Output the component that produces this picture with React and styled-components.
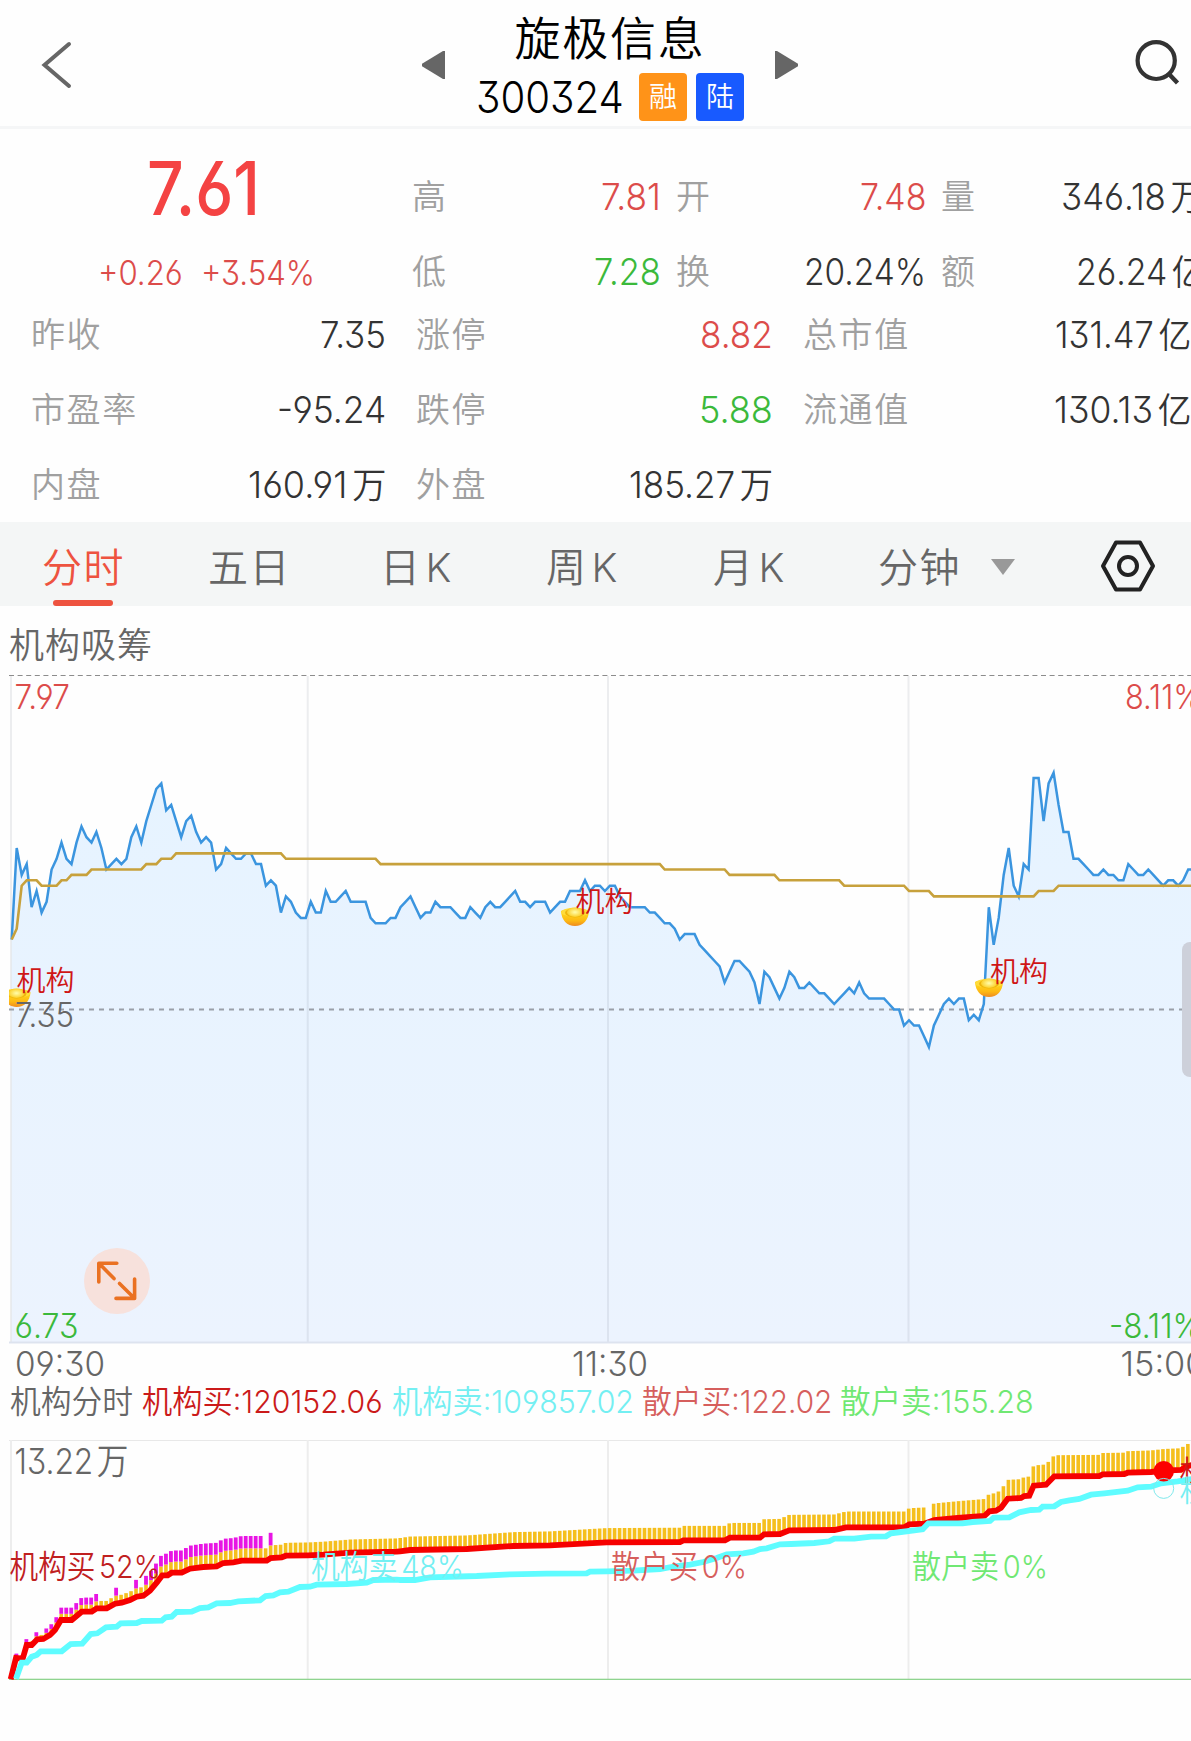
import React, { useLayoutEffect, useRef, useState } from 'react';
import styled, { createGlobalStyle } from 'styled-components';

const FONT = 'Inter, "Noto Sans CJK SC", sans-serif';
const C = {
  red: '#dc4c4a',
  green: '#3bb93b',
  ink: '#333333',
  label: '#a0a0a0',
  gray: '#666666',
};

const Global = createGlobalStyle`
  * { box-sizing: border-box; }
  body {
    margin: 0;
    background: #fefefe;
    overflow: hidden;
    font-family: ${FONT};
    font-feature-settings: "cv03", "cv04", "cv09";
  }
`;

const Page = styled.div`
  width: 1191px;
  height: 1741px;
  overflow: hidden;
  background: #fefefe;
`;

/* ---------- text squeezed to a fixed advance width ---------- */
const FitBox = styled.span`
  display: block;
  flex: none;
  width: ${(p) => p.$w}px;
  white-space: nowrap;
  color: ${(p) => p.$color};
  font-size: ${(p) => p.$size}px;
  font-weight: ${(p) => p.$weight || 350};
  line-height: 50px;
`;
const FitInner = styled.span`
  display: inline-block;
  transform-origin: 0 50%;
`;
const Unit = styled.span`
  margin-left: 5px;
  font-size: 0.95em;
`;
function Fit({ w, size = 37, color = C.ink, weight, children }) {
  const ref = useRef(null);
  const [scale, setScale] = useState(1);
  useLayoutEffect(() => {
    setScale(w / ref.current.offsetWidth);
  }, [w]);
  return (
    <FitBox $w={w} $size={size} $color={color} $weight={weight}>
      <FitInner ref={ref} style={{ transform: `scaleX(${scale})` }}>
        {children}
      </FitInner>
    </FitBox>
  );
}

/* ---------- header ---------- */
const Header = styled.header`
  display: flex;
  align-items: center;
  height: 129px;
  border-bottom: 3px solid #f5f6f7;
`;
const BackIcon = styled.svg`
  flex: none;
  width: 38px;
  height: 52px;
  margin: 4px 345px 0 38px;
`;
const Arrow = styled.svg`
  flex: none;
  width: 24px;
  height: 28px;
  margin-top: 4px;
`;
const TitleBlock = styled.div`
  display: flex;
  flex-direction: column;
  align-items: center;
  width: 330px;
  height: 126px;
  padding-top: 8px;
`;
const Name = styled.div`
  height: 60px;
  line-height: 60px;
  font-size: 46px;
  font-weight: 350;
  letter-spacing: 1.8px;
  color: #000;
`;
const CodeRow = styled.div`
  display: flex;
  align-items: center;
  height: 62px;
`;
const Badge = styled.span`
  width: 48px;
  height: 48px;
  margin-left: ${(p) => p.$gap}px;
  border-radius: 4px;
  background: ${(p) => p.$bg};
  color: #fff;
  font-size: 28px;
  font-weight: 350;
  line-height: 49px;
  text-align: center;
`;
const SearchIcon = styled.svg`
  flex: none;
  width: 50px;
  height: 54px;
  margin: 0 0 2px 333px;
`;

/* ---------- quote ---------- */
const Quote = styled.section`
  height: 393px;
`;
const QuoteTop = styled.div`
  display: flex;
  height: 168px;
`;
const PriceBlock = styled.div`
  display: flex;
  flex: none;
  flex-direction: column;
  align-items: center;
  width: 412px;
  padding-top: 34px;
`;
const BigPrice = styled.div`
  display: flex;
  height: 87px;
  align-items: center;
  padding-bottom: 35px;
  margin-right: 6px;
`;
const Change = styled.div`
  display: flex;
  gap: 18px;
`;
const TopGrid = styled.div`
  display: grid;
  flex: none;
  grid-template-columns: 249px 250px 263px;
  column-gap: 15px;
  row-gap: 25px;
  grid-auto-rows: 50px;
  padding-top: 43px;
`;
const DetailGrid = styled.div`
  display: grid;
  grid-template-columns: 355px 357px 388px;
  grid-auto-rows: 75px;
  column-gap: 30px;
  padding-left: 31px;
`;
const Cell = styled.div`
  display: flex;
  align-items: center;
  justify-content: space-between;
`;
const Label = styled.span`
  color: ${C.label};
  font-size: 34px;
  font-weight: 350;
  letter-spacing: 1.6px;
  line-height: 52px;
  white-space: nowrap;
`;

/* ---------- tabs ---------- */
const Tabs = styled.nav`
  display: flex;
  align-items: center;
  height: 84px;
  padding-left: 42px;
  background: #f4f6f6;
`;
const Tab = styled.div`
  position: relative;
  width: ${(p) => p.$w}px;
  height: 84px;
  line-height: 92px;
  font-size: 40px;
  font-weight: 350;
  letter-spacing: 1.5px;
  white-space: nowrap;
  color: ${(p) => (p.$active ? '#ee5340' : C.gray)};
  &::after {
    content: '';
    display: ${(p) => (p.$active ? 'block' : 'none')};
    position: absolute;
    left: 11px;
    bottom: 0;
    width: 60px;
    height: 6px;
    border-radius: 3px;
    background: #ee5340;
  }
`;
const Kay = styled.span`
  margin-left: 4px;
  font-weight: 350;
`;
const Caret = styled.svg`
  width: 24px;
  height: 16px;
  margin: 5px 85px 0 0;
`;
const HexIcon = styled.svg`
  width: 56px;
  height: 54px;
  margin-top: 4px;
`;

/* ---------- charts ---------- */
const ChartTitle = styled.div`
  height: 68px;
  padding-left: 9px;
  font-size: 35px;
  font-weight: 350;
  letter-spacing: 1px;
  line-height: 79px;
  color: ${C.gray};
`;
const Chart = styled.svg`
  display: block;
  width: 1191px;
  height: ${(p) => p.$h}px;
`;
const Legend = styled.div`
  display: flex;
  align-items: center;
  height: 49px;
  padding: 0 0 7px 10px;
`;
const LegendGap = styled.span`
  width: ${(p) => p.$w}px;
`;

const STEP = 4.985;
const X0 = 11.7;
const CENTS = [
  13, 30, 25, 27, 19, 22, 18, 20, 26, 28, 31, 28, 27, 31, 34, 32, 31, 33, 30, 26,
  27, 28, 27, 28, 32, 34, 31, 35, 38, 41, 42, 37, 38, 35, 32, 35, 36, 33, 31, 32,
  31, 26, 27, 30, 29, 28, 28, 29, 29, 27, 27, 23, 24, 23, 18, 21, 20, 18, 17, 17,
  20, 18, 18, 22, 20, 20, 21, 22, 20, 20, 20, 20, 17, 16, 16, 16, 17, 17, 19, 20,
  21, 19, 17, 18, 18, 20, 19, 19, 19, 18, 17, 17, 19, 18, 17, 19, 20, 19, 19, 20,
  21, 22, 20, 20, 19, 20, 20, 20, 18, 19, 20, 20, 22, 22, 22, 24, 22, 23, 23, 22,
  23, 23, 21, 20, 19, 19, 19, 19, 18, 18, 17, 16, 16, 15, 13, 14, 14, 14, 12, 11,
  10, 9, 8, 5, 7, 9, 9, 8, 7, 5, 1, 7, 6, 4, 2, 4, 7, 6, 4, 4,
  5, 4, 3, 3, 2, 1, 2, 3, 4, 3, 5, 3, 2, 2, 2, 2, 1, 0, 0, -3,
  -2, -3, -3, -5, -7, -3, -1, 1, 2, 1, 2, 2, -2, -1, -2, 1, 19, 12, 17, 25,
  30, 23, 21, 27, 26, 43, 43, 35, 42, 44, 38, 33, 33, 28, 28, 27, 26, 25, 25, 26,
  25, 25, 24, 24, 27, 26, 25, 25, 26, 25, 24, 23, 24, 24, 23, 24, 26, 26,
];
const AVG = [
  [0, 13], [1, 15], [2, 23], [3, 24], [5, 24], [6, 23], [9, 23], [10, 24], [11, 24], [12, 25],
  [15, 25], [16, 26], [26, 26], [27, 27], [29, 27], [30, 28], [32, 28], [33, 29], [54, 29],
  [55, 28], [73, 28], [74, 27], [130, 27], [131, 26], [143, 26], [144, 25], [153, 25],
  [154, 24], [166, 24], [167, 23], [179, 23], [180, 22], [184, 22], [185, 21], [205, 21],
  [206, 22], [209, 22], [210, 23], [238, 23],
];
const px = (i) => X0 + i * STEP;
const py = (c) => 335.4 - c * 5.38;
const join = (pts) => pts.map(([x, y]) => `${x.toFixed(1)},${y.toFixed(1)}`).join(' ');

const pricePts = CENTS.map((c, i) => [px(i), py(c)]);
const priceLine = join(pricePts);
const priceArea = `${X0},668 ${priceLine} 1194,668`;
const avgLine = join(AVG.map(([i, c]) => [px(i), py(c)]));

/* Flow curves are kept in thirds of a pixel, one array per stretch of the session. */
const part = (ox, oy, pts) => pts.map(([x, y]) => [ox + x / 3, oy + y / 3]);
const BUY = [
  ...part(0, 0, [
    [32, 748], [48, 684], [68, 686], [80, 645], [95, 645], [112, 628], [130, 627], [150, 615],
    [165, 600], [183, 570], [215, 570], [245, 545], [275, 545], [290, 535], [320, 535],
    [345, 521], [365, 518], [390, 510], [410, 500], [430, 497], [450, 482], [470, 458],
    [487, 436], [503, 436], [515, 428], [545, 428], [570, 416], [610, 411], [650, 409],
    [670, 399], [700, 397], [725, 392], [800, 392], [812, 384], [845, 382], [858, 377],
    [925, 376], [970, 374], [1050, 368], [1190, 365],
  ]),
  ...part(400, -70, [
    [0, 574], [30, 570], [200, 567], [340, 558], [450, 556], [620, 547], [840, 546],
    [850, 541], [975, 541], [990, 533], [1080, 533], [1092, 523], [1140, 522], [1168, 511],
  ]),
  ...part(791, -110, [
    [0, 631], [130, 630], [165, 622], [340, 622], [355, 613], [400, 611], [430, 600],
    [500, 594], [580, 588], [595, 574], [615, 572], [630, 563], [650, 536], [690, 534],
    [700, 528], [715, 527], [728, 497], [765, 494], [790, 469], [925, 468], [935, 463],
    [1000, 462], [1010, 458], [1080, 456], [1120, 452], [1170, 450], [1185, 440], [1206, 434],
  ]),
];
const SELL = [
  ...part(0, 0, [
    [48, 746], [65, 698], [80, 698], [95, 680], [110, 675], [122, 664], [185, 664], [212, 642],
    [247, 641], [272, 612], [292, 610], [318, 592], [350, 590], [362, 580], [410, 579],
    [425, 573], [485, 572], [497, 562], [515, 560], [530, 546], [575, 545], [600, 534],
    [625, 532], [650, 520], [690, 519], [715, 514], [780, 511], [797, 498], [820, 496],
    [840, 487], [865, 485], [900, 471], [930, 470], [950, 464], [1040, 462], [1100, 458],
    [1120, 450], [1190, 449],
  ]),
  ...part(400, -70, [
    [0, 660], [45, 660], [90, 652], [230, 648], [330, 643], [440, 641], [560, 640],
    [570, 635], [620, 634], [700, 632], [780, 627], [830, 618], [870, 614], [910, 606],
    [950, 594], [980, 583], [1030, 580], [1060, 575], [1080, 567], [1100, 565], [1140, 553],
  ]),
  ...part(791, -110, [
    [0, 672], [70, 669], [115, 664], [130, 656], [190, 656], [240, 650], [285, 649],
    [300, 640], [330, 636], [395, 628], [412, 610], [515, 610], [545, 606], [597, 603],
    [608, 593], [655, 592], [685, 577], [720, 570], [745, 569], [755, 560], [790, 559],
    [810, 546], [835, 541], [865, 537], [900, 524], [940, 520], [1010, 512], [1040, 502],
    [1080, 500], [1110, 490], [1160, 484], [1206, 477],
  ]),
];
const BASE = 249.3;
const yAt = (pts, x) => {
  for (let i = 1; i < pts.length; i += 1) {
    if (x <= pts[i][0]) {
      const [xa, ya] = pts[i - 1];
      const [xb, yb] = pts[i];
      return ya + ((yb - ya) * (x - xa)) / (xb - xa);
    }
  }
  return pts[pts.length - 1][1];
};
const SURGE = new Set([1, 3, 5, 7, 8, 9, 10, 11, 12, 13, 14, 15, 16, 17, 21, 25, 27, 28, 29, 52]);
for (let i = 30; i <= 50; i += 1) SURGE.add(i);
const BARS = [];
for (let i = 1; i < 238; i += 1) {
  if (i !== 184) {
    const x = px(i) - 0.3;
    const y = yAt(BUY, x);
    BARS.push({ i, x, y, h: (BASE - y) * 0.104, surge: SURGE.has(i) });
  }
}

function T({ x, y, w, size, fill, weight = 350, children }) {
  return (
    <text
      x={x}
      y={y}
      textLength={w}
      lengthAdjust="spacingAndGlyphs"
      fontSize={size}
      fontWeight={weight}
      fill={fill}
    >
      {children}
    </text>
  );
}

function Ingot({ x, y }) {
  return (
    <g transform={`translate(${x} ${y})`}>
      <path d="M0 4 C0.5 13 6 19 14 19 C22 19 27.5 13 28 4 C24 1 4 1 0 4Z" fill="url(#gold)" />
      <ellipse cx="14" cy="5.2" rx="13.6" ry="4.4" fill="#ffdc3c" />
      <ellipse cx="14" cy="5.8" rx="10" ry="4.6" fill="#eeb50c" />
      <ellipse cx="14" cy="5.2" rx="8" ry="4.8" fill="url(#shine)" />
    </g>
  );
}

const GRID_X = [307.7, 608, 908.5];

function PriceChart() {
  return (
    <Chart $h={707} viewBox="0 0 1191 707">
      <defs>
        <linearGradient id="area" x1="0" y1="0" x2="0" y2="1">
          <stop offset="0" stopColor="#e6f3ff" />
          <stop offset="1" stopColor="#ecf3fe" />
        </linearGradient>
        <linearGradient id="gold" x1="0" y1="0" x2="0" y2="1">
          <stop offset="0.3" stopColor="#ffd21a" />
          <stop offset="0.7" stopColor="#fdb813" />
          <stop offset="1" stopColor="#ee8a20" />
        </linearGradient>
        <radialGradient id="shine">
          <stop offset="0.1" stopColor="#fff9a0" />
          <stop offset="1" stopColor="#fbd02a" />
        </radialGradient>
        <clipPath id="plot">
          <rect x="9" y="0" width="1182" height="669" />
        </clipPath>
      </defs>
      <polygon points={priceArea} fill="url(#area)" />
      <rect x="10" y="2" width="2" height="667" fill="#4a5570" opacity="0.1" />
      {GRID_X.map((x) => (
        <rect key={x} x={x - 1} y="2" width="2" height="667" fill="#4a5570" opacity="0.1" />
      ))}
      <rect x="9" y="667.5" width="1182" height="2" fill="#dde3ef" />
      <path d="M9 1.5H1191" stroke="#8c8c8c" strokeWidth="1.2" strokeDasharray="5 3.6" />
      <path d="M9 335.5H1191" stroke="#9a9fa8" strokeWidth="2" strokeDasharray="5 5" />
      <polyline points={priceLine} fill="none" stroke="#3b95df" strokeWidth="2.5" />
      <polyline points={avgLine} fill="none" stroke="#c7a13c" strokeWidth="2.6" />
      <g clipPath="url(#plot)">
        <Ingot x={2.5} y={314} />
      </g>
      <Ingot x={561} y={233} />
      <Ingot x={975} y={304} />
      <T x={16.5} y={317} w={58} size={28.5} fill="#cf1616">机构</T>
      <T x={575.5} y={237.5} w={58} size={28.5} fill="#cf1616">机构</T>
      <T x={990} y={307.5} w={58} size={28.5} fill="#cf1616">机构</T>
      <T x={14.5} y={35} w={55.5} size={34} fill={C.red}>7.97</T>
      <T x={1125} y={35} w={77} size={34} fill={C.red}>8.11%</T>
      <T x={15} y={353} w={59} size={34} fill={C.gray}>7.35</T>
      <T x={14.5} y={664} w={64} size={34} fill={C.green}>6.73</T>
      <T x={1109} y={664} w={93} size={34} fill={C.green}>-8.11%</T>
      <T x={15} y={702} w={90} size={34.5} fill={C.gray}>09:30</T>
      <T x={572} y={702} w={76} size={34.5} fill={C.gray}>11:30</T>
      <T x={1120.5} y={702} w={86} size={34.5} fill={C.gray}>15:00</T>
      <circle cx="117" cy="607" r="33" fill="#f7e1dc" />
      <g fill="none" stroke="#ea7122" strokeWidth="3.6" strokeLinecap="round" strokeLinejoin="round">
        <path d="M98.8 608V589.2H116.8M99.2 589.6L114 604.6" />
        <path d="M134.6 605V624.4H116M134.2 624L119.5 609.5" />
      </g>
      <path d="M1191 268H1190a8 8 0 0 0-8 8V395a8 8 0 0 0 8 8H1191Z" fill="#cdd0da" />
    </Chart>
  );
}

function FlowChart() {
  return (
    <Chart $h={275} viewBox="0 0 1191 275">
      <rect x="9" y="10" width="1182" height="1" fill="#e8e8e8" />
      <rect x="10" y="10" width="2" height="239" fill="#ededed" />
      {GRID_X.map((x) => (
        <rect key={x} x={x - 1} y="10" width="2" height="239" fill="#ededed" />
      ))}
      <rect x="9" y="248.7" width="1182" height="1.3" fill="#8fd48f" />
      {BARS.map((b) => (
        <g key={b.i}>
          <rect x={b.x - 1.8} y={b.y - b.h} width="3.6" height={b.h} fill="#f5bf1d" />
          {b.surge && (
            <rect x={b.x - 1.9} y={b.y - b.h * 2} width="3.8" height={b.h} fill="#e815e4" />
          )}
        </g>
      ))}
      <polyline points={join(BUY)} fill="none" stroke="#f60000" strokeWidth="5.8" />
      <polyline points={join(SELL)} fill="none" stroke="#5ffcff" strokeWidth="5.8" />
      <circle cx="1163.7" cy="41.2" r="10.3" fill="#fc0000" />
      <circle cx="1163.7" cy="58.4" r="10" fill="none" stroke="#7fe9ec" strokeWidth="1" />
      <T x={14.5} y={44} w={114} size={35} fill={C.gray}>13.22<tspan dx="4">万</tspan></T>
      <T x={9.5} y={148} w={151} size={31.5} fill="#c0201f">机构买<tspan dx="4">52%</tspan></T>
      <T x={311} y={148} w={153} size={31.5} fill="#74eff2">机构卖<tspan dx="4">48%</tspan></T>
      <T x={611} y={148} w={136} size={31.5} fill="#d65f5d">散户买<tspan dx="4">0%</tspan></T>
      <T x={912} y={148} w={136} size={31.5} fill="#70e873">散户卖<tspan dx="4">0%</tspan></T>
      <T x={1179.5} y={52} w={59} size={29} fill="#cf1616">机构</T>
      <T x={1179.5} y={71.5} w={59} size={29} fill="#74eff2">机构</T>
    </Chart>
  );
}

const TOP = [
  ['高', '7.81', '', 60, C.red],
  ['开', '7.48', '', 66, C.red],
  ['量', '346.18', '万', 143, C.ink],
  ['低', '7.28', '', 67, C.green],
  ['换', '20.24%', '', 122, C.ink],
  ['额', '26.24', '亿', 128, C.ink],
];
const DETAIL = [
  ['昨收', '7.35', '', 66, C.ink],
  ['涨停', '8.82', '', 73, C.red],
  ['总市值', '131.47', '亿', 136, C.ink],
  ['市盈率', '-95.24', '', 109, C.ink],
  ['跌停', '5.88', '', 74, C.green],
  ['流通值', '130.13', '亿', 137, C.ink],
  ['内盘', '160.91', '万', 138, C.ink],
  ['外盘', '185.27', '万', 144, C.ink],
];
const cells = (rows) =>
  rows.map(([label, value, unit, w, color]) => (
    <Cell key={label}>
      <Label>{label}</Label>
      <Fit w={w} color={color}>
        {value}
        {unit && <Unit>{unit}</Unit>}
      </Fit>
    </Cell>
  ));

export default function App() {
  return (
    <Page>
      <Global />
      <Header>
        <BackIcon viewBox="0 0 38 52">
          <path d="M31 5L6.5 26L31 47" fill="none" stroke="#666" strokeWidth="4" strokeLinecap="round" />
        </BackIcon>
        <Arrow viewBox="0 0 24 28">
          <path d="M24 0V28L22 28L1 15.2V12.8L22 0Z" fill="#666" />
        </Arrow>
        <TitleBlock>
          <Name>旋极信息</Name>
          <CodeRow>
            <Fit w={148} size={44} color="#000">300324</Fit>
            <Badge $bg="#ff9318" $gap={15}>融</Badge>
            <Badge $bg="#185aff" $gap={9}>陆</Badge>
          </CodeRow>
        </TitleBlock>
        <Arrow viewBox="0 0 24 28">
          <path d="M0 0V28L2 28L23 15.2V12.8L2 0Z" fill="#666" />
        </Arrow>
        <SearchIcon viewBox="0 0 50 54">
          <ellipse cx="24.2" cy="25.6" rx="18.6" ry="18.4" fill="none" stroke="#333" strokeWidth="4.2" />
          <path d="M36.5 38.5L45.5 48" stroke="#333" strokeWidth="4.4" />
        </SearchIcon>
      </Header>

      <Quote>
        <QuoteTop>
          <PriceBlock>
            <BigPrice>
              <Fit w={113} size={74} weight={500} color="#f44343">7.61</Fit>
            </BigPrice>
            <Change>
              <Fit w={85} size={34.5} color={C.red}>+0.26</Fit>
              <Fit w={114} size={34.5} color={C.red}>+3.54%</Fit>
            </Change>
          </PriceBlock>
          <TopGrid>{cells(TOP)}</TopGrid>
        </QuoteTop>
        <DetailGrid>{cells(DETAIL)}</DetailGrid>
      </Quote>

      <Tabs>
        <Tab $active $w={166}>分时</Tab>
        <Tab $w={172}>五日</Tab>
        <Tab $w={166}>日<Kay>K</Kay></Tab>
        <Tab $w={167}>周<Kay>K</Kay></Tab>
        <Tab $w={165}>月<Kay>K</Kay></Tab>
        <Tab $w={113}>分钟</Tab>
        <Caret viewBox="0 0 24 16">
          <path d="M0 0H24L12 16Z" fill="#999" />
        </Caret>
        <HexIcon viewBox="0 0 56 54">
          <path d="M16 3.5H40L53 27L40 50.5H16L3 27Z" fill="none" stroke="#222" strokeWidth="4" strokeLinejoin="round" />
          <circle cx="28" cy="27" r="9" fill="none" stroke="#222" strokeWidth="4" />
        </HexIcon>
      </Tabs>

      <ChartTitle>机构吸筹</ChartTitle>
      <PriceChart />
      <Legend>
        <Fit w={123} size={31.5} color={C.gray}>机构分时</Fit>
        <LegendGap $w={9} />
        <Fit w={241} size={31.5} color="#cb1a1a">机构买:120152.06</Fit>
        <LegendGap $w={9} />
        <Fit w={242} size={31.5} color="#74eff2">机构卖:109857.02</Fit>
        <LegendGap $w={8} />
        <Fit w={190} size={31.5} color="#d65f5d">散户买:122.02</Fit>
        <LegendGap $w={8} />
        <Fit w={194} size={31.5} color="#70e873">散户卖:155.28</Fit>
      </Legend>
      <FlowChart />
    </Page>
  );
}
